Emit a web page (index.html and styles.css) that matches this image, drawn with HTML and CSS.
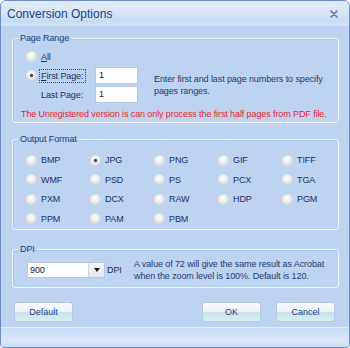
FILE: index.html
```html
<!DOCTYPE html>
<html>
<head>
<meta charset="utf-8">
<link rel="stylesheet" href="styles.css">
</head>
<body>
<div class="window">
  <div class="titlebar">
    <span class="title">Conversion Options</span>
    <svg class="close" width="8" height="8" viewBox="0 0 8 8"><path d="M1 1L7 7M7 1L1 7" stroke="#6b7891" stroke-width="1.6" stroke-linecap="round"/></svg>
  </div>
  <div class="body">
    <fieldset class="group g-range">
      <legend>Page Range</legend>
      <div class="range-grid">
        <label class="opt r-all"><span class="radio"></span><span><u>A</u>ll</span></label>
        <label class="opt r-first"><span class="radio on"></span><span class="focus"><u>F</u>irst Page:</span></label>
        <span class="field f1">1</span>
        <p class="hint">Enter first and last page numbers to specify<br>pages ranges.</p>
        <span class="last-label">Last Page:</span>
        <span class="field f2">1</span>
      </div>
      <p class="warn">The Unregistered version is can only process the first half pages from PDF file.</p>
    </fieldset>

    <fieldset class="group g-format">
      <legend>Output Format</legend>
      <div class="format-grid">
        <label class="opt"><span class="radio"></span>BMP</label>
        <label class="opt"><span class="radio on"></span>JPG</label>
        <label class="opt"><span class="radio"></span>PNG</label>
        <label class="opt"><span class="radio"></span>GIF</label>
        <label class="opt"><span class="radio"></span>TIFF</label>
        <label class="opt"><span class="radio"></span>WMF</label>
        <label class="opt"><span class="radio"></span>PSD</label>
        <label class="opt"><span class="radio"></span>PS</label>
        <label class="opt"><span class="radio"></span>PCX</label>
        <label class="opt"><span class="radio"></span>TGA</label>
        <label class="opt"><span class="radio"></span>PXM</label>
        <label class="opt"><span class="radio"></span>DCX</label>
        <label class="opt"><span class="radio"></span>RAW</label>
        <label class="opt"><span class="radio"></span>HDP</label>
        <label class="opt"><span class="radio"></span>PGM</label>
        <label class="opt"><span class="radio"></span>PPM</label>
        <label class="opt"><span class="radio"></span>PAM</label>
        <label class="opt"><span class="radio"></span>PBM</label>
      </div>
    </fieldset>

    <fieldset class="group g-dpi">
      <legend>DPI</legend>
      <div class="dpi-row">
        <div class="combo"><span class="combo-val">900</span><span class="combo-btn"><span class="tri"></span></span></div>
        <span class="dpi-label">DPI</span>
        <p class="hint dpi-hint">A value of 72 will give the same result as Acrobat<br>when the zoom level is 100%. Default is 120.</p>
      </div>
    </fieldset>

    <div class="buttons">
      <button class="btn">Default</button>
      <span class="spacer"></span>
      <button class="btn">OK</button>
      <button class="btn">Cancel</button>
    </div>
  </div>
  <div class="status"></div>
</div>
</body>
</html>
```

FILE: styles.css
```css
html, body {
  margin: 0;
  padding: 0;
}

.window {
  width: 350px;
  height: 348px;
  box-sizing: border-box;
  border: 1px solid #6a8dc6;
  border-radius: 6px 6px 4px 4px;
  background: #bed3ef;
  display: flex;
  flex-direction: column;
  overflow: hidden;
  font-family: "Liberation Sans", Arial, sans-serif;
  font-size: 9px;
  letter-spacing: -0.1px;
  color: #1b2f68;
}

.titlebar {
  height: 25px;
  flex: none;
  display: flex;
  align-items: center;
  justify-content: space-between;
  padding: 0 11px 0 6px;
  background: linear-gradient(#e4eefb 0%, #d3e2f6 55%, #c8dbf4 80%, #d5e4f8 100%);
}

.title {
  font-size: 12px;
  letter-spacing: 0;
  color: #15428b;
  line-height: 14px;
}

.close {
  display: block;
}

.body {
  flex: 1;
  display: flex;
  flex-direction: column;
  padding: 6px 10px 0 11px;
}

.group {
  margin: 0;
  border: 1px solid #eef4fc;
  border-radius: 3px;
  box-shadow: inset 1px 1px 0 #aec6e6;
  padding: 4px 10px 2px 13px;
  min-width: 0;
}

.group legend {
  padding: 0 2px;
  margin-left: -8px;
  line-height: 12px;
  color: #15428b;
}

.g-format {
  margin-top: 10px;
  padding-top: 5px;
  padding-bottom: 1px;
}

.g-dpi {
  margin-top: 13px;
  padding-top: 3px;
  padding-bottom: 5px;
}

.opt {
  display: flex;
  align-items: center;
  gap: 4px;
  white-space: nowrap;
}

.radio {
  width: 11px;
  height: 11px;
  flex: none;
  border-radius: 50%;
  background: radial-gradient(circle at 45% 40%, #ffffff 0%, #f1f2f3 30%, #d6d9de 70%, #b7bcc5 100%);
  box-shadow: 0 0 0 0.5px #c3ccd8;
}

.radio.on {
  background:
    radial-gradient(circle at 50% 50%, #4a4d55 0, #5d6068 1.4px, rgba(93, 96, 104, 0) 2.2px),
    radial-gradient(circle at 45% 40%, #ffffff 0%, #f1f2f3 30%, #d6d9de 70%, #b7bcc5 100%);
}

.range-grid {
  display: grid;
  grid-template-columns: 69px 43px 1fr;
  grid-template-rows: 17px 17px 17px;
  row-gap: 2px;
  align-items: center;
}

.r-all {
  grid-column: 1 / 4;
  grid-row: 1;
}

.r-first {
  grid-column: 1;
  grid-row: 2;
}

.focus {
  outline: 1px dotted #3b4a6b;
  outline-offset: 1px;
  padding: 0 1px 0 0;
}

.field {
  box-sizing: border-box;
  height: 17px;
  background: #fff;
  border: 1px solid #b6c8de;
  padding-left: 3px;
  line-height: 15px;
  color: #10183a;
}

.f1 {
  grid-column: 2;
  grid-row: 2;
}

.f2 {
  grid-column: 2;
  grid-row: 3;
}

.last-label {
  grid-column: 1;
  grid-row: 3;
  padding-left: 15px;
}

.hint {
  margin: 0;
  line-height: 12px;
  color: #22397a;
}

.range-grid .hint {
  grid-column: 3;
  grid-row: 2 / 4;
  padding-left: 16px;
  align-self: center;
}

.warn {
  margin: 5px 0 0 -5px;
  line-height: 12px;
  color: #e8242c;
  white-space: nowrap;
}

.format-grid {
  display: grid;
  grid-template-columns: repeat(5, 64px);
  grid-template-rows: 20px 19px 20px 19px;
  align-items: center;
}

.dpi-row {
  display: flex;
  align-items: center;
  height: 24px;
}

.combo {
  display: flex;
  box-sizing: border-box;
  width: 78px;
  height: 16px;
  margin-left: 1px;
  border: 1px solid #b6c8de;
  background: #fff;
}

.combo-val {
  flex: 1;
  padding-left: 2px;
  line-height: 14px;
  color: #10183a;
}

.combo-btn {
  width: 15px;
  border-left: 1px solid #cbd7e6;
  background: linear-gradient(#f4f7fb, #e1e8f1);
  display: flex;
  align-items: center;
  justify-content: center;
}

.tri {
  width: 0;
  height: 0;
  border-left: 3.5px solid transparent;
  border-right: 3.5px solid transparent;
  border-top: 4px solid #1b1b1b;
}

.dpi-label {
  margin-left: 2px;
  width: 27px;
  flex: none;
}

.dpi-hint {
  white-space: nowrap;
}

.buttons {
  display: flex;
  align-items: center;
  gap: 15px;
  margin-top: 14px;
  padding: 0 4px 0 2px;
}

.spacer {
  flex: 1;
}

.btn {
  width: 59px;
  height: 20px;
  margin: 0;
  padding: 0;
  box-sizing: border-box;
  border: 1px solid #b5c9e2;
  border-radius: 3px;
  background: linear-gradient(#f9fbfe 0%, #edf3fa 48%, #c4e2e9 50%, #d9eef2 100%);
  color: #15428b;
  font-family: "Liberation Sans", Arial, sans-serif;
  font-size: 9px;
}

.status {
  height: 19px;
  flex: none;
  border-top: 1px solid #e3edfa;
  background: linear-gradient(#c9dcf5, #d9e6f8 60%, #cddff6);
}
```
